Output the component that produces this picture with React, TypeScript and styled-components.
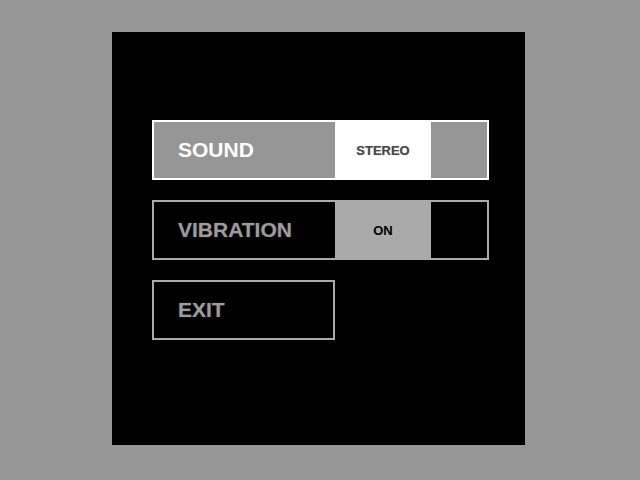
import React, { ReactElement } from 'react'
import styled, { createGlobalStyle } from 'styled-components'

const GlobalStyle = createGlobalStyle`
  html, body {
    margin: 0;
    padding: 0;
    background: #969696;
  }
  body {
    width: 640px;
    height: 480px;
    font-family: 'Liberation Sans', Arial, sans-serif;
  }
`

const Screen = styled.div`
  width: 640px;
  height: 480px;
  display: flex;
  align-items: flex-start;
  justify-content: flex-start;
  padding: 32px 0 0 112px;
  box-sizing: border-box;
`

const Panel = styled.div`
  width: 413px;
  height: 413px;
  background: #000;
  box-sizing: border-box;
  padding: 88px 0 0 40px;
  display: flex;
  flex-direction: column;
  gap: 20px;
`

const Row = styled.div<{ $active?: boolean; $width: number }>`
  width: ${(p) => p.$width}px;
  height: 60px;
  box-sizing: border-box;
  border: 2px solid ${(p) => (p.$active ? '#ffffff' : '#aaaaaa')};
  background: ${(p) => (p.$active ? '#969696' : '#000')};
  display: flex;
  align-items: stretch;
`

const Label = styled.div<{ $active?: boolean }>`
  width: 181px;
  flex: none;
  display: flex;
  align-items: center;
  padding-left: 24px;
  box-sizing: border-box;
  font-size: 21px;
  font-weight: bold;
  color: ${(p) => (p.$active ? '#ffffff' : '#9c9c9c')};
  text-shadow: ${(p) => (p.$active ? 'none' : '0 0 2px #3a3a3a')};
`

const Value = styled.div<{ $active?: boolean }>`
  width: 96px;
  flex: none;
  display: flex;
  align-items: center;
  justify-content: center;
  font-size: 13px;
  font-weight: bold;
  background: ${(p) => (p.$active ? '#ffffff' : '#aaaaaa')};
  color: ${(p) => (p.$active ? '#4a4a4a' : '#000')};
  text-shadow: ${(p) => (p.$active ? '0 0 1px #9a9a9a' : 'none')};
`

const Spacer = styled.div`
  flex: 1;
`

const App = (): ReactElement => (
  <>
    <GlobalStyle />
    <Screen>
      <Panel>
        <Row $active $width={337}>
          <Label $active>SOUND</Label>
          <Value $active>STEREO</Value>
          <Spacer />
        </Row>
        <Row $width={337}>
          <Label>VIBRATION</Label>
          <Value>ON</Value>
          <Spacer />
        </Row>
        <Row $width={183}>
          <Label>EXIT</Label>
        </Row>
      </Panel>
    </Screen>
  </>
)

export default App
